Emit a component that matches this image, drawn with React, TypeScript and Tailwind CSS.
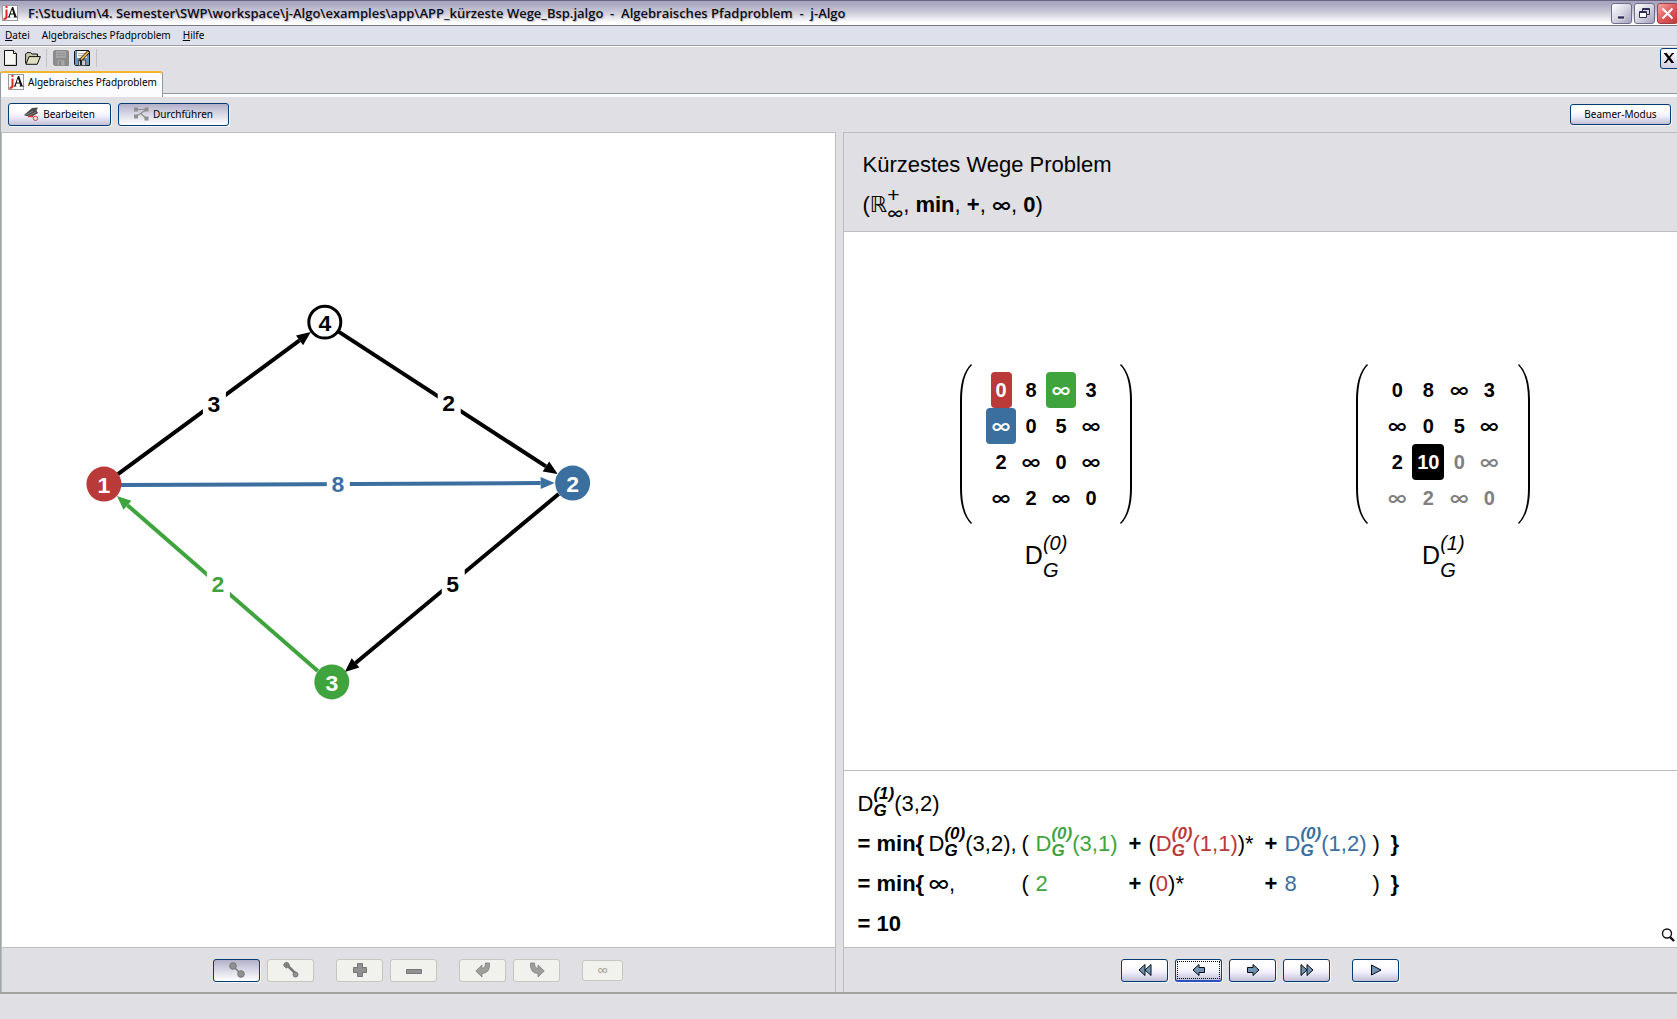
import type { ReactNode } from "react";

const RED = "#b93a39";
const GREEN = "#40a43e";
const BLUE = "#3a6f9f";

/* ---------- small building blocks ---------- */

function LogoIcon() {
  return (
    <svg width="16" height="16" viewBox="0 0 16 16" aria-hidden="true" className="shrink-0">
      <rect x="0.5" y="0.5" width="15" height="15" fill="#fff" stroke="#9a9a9a" />
      <path d="M4.500 4.500v7q0 2.500-3 2.500" fill="none" stroke="#e0281c" strokeWidth="2" />
      <rect x="3.500" y="1" width="2" height="2" fill="#e0281c" />
      <path d="M5.500 12.500V12l1-.5L10 2h1.200l3.300 9.500 1 .5v.5h-4V12l.7-.5-.6-2H8.400l-.7 2 .8.5v.5ZM8.700 8.500h2.600L10 4.600Z" fill="#111" fillRule="evenodd" />
    </svg>
  );
}

function Infinity({ italic = false, className = "text-[20px] font-medium" }: { italic?: boolean; className?: string }) {
  return (
    <span className={`font-['Inter',sans-serif] leading-none ${italic ? "italic" : ""} ${className}`}>∞</span>
  );
}

function Stacked({ sup, sub, large = false }: { sup: ReactNode; sub: ReactNode; large?: boolean }) {
  return (
    <span
      className={
        large
          ? "inline-flex flex-col align-[14px] text-[20px] leading-[27px] italic"
          : "inline-flex flex-col align-[12px] text-[17px] leading-[17px] font-bold italic"
      }
    >
      <span>{sup}</span>
      <span>{sub}</span>
    </span>
  );
}

function Dist({ step, from, to }: { step: number; from: number; to: number }) {
  return (
    <>
      D
      <Stacked sup={`(${step})`} sub="G" />({from},{to})
    </>
  );
}

function PushButton({
  label,
  children,
  state = "normal",
  size = "h-[23px] w-[47px]",
}: {
  label?: string;
  children: ReactNode;
  state?: "normal" | "pressed" | "disabled" | "focused";
  size?: string;
}) {
  const look = {
    normal: "border-[#003c74] bg-linear-to-b from-white from-30% via-[#efeefa] via-60% to-[#c3c0d8] shadow-[1px_1px_0_#f4f4f6]",
    focused: "border-[#003c74] border-b-2 border-b-[#2a50c0] bg-linear-to-b from-white from-30% via-[#efeefa] via-60% to-[#c3c0d8] shadow-[1px_1px_0_#f4f4f6]",
    pressed: "border-[#003c74] bg-linear-to-b from-[#b3b0c8] via-[#dad9e6] via-50% to-white shadow-[1px_1px_0_#f4f4f6]",
    disabled: "border-[#c6c5bf] bg-[#f1f1ed] text-[#a8a698]",
  }[state];
  return (
    <button
      type="button"
      aria-label={label}
      disabled={state === "disabled"}
      className={`relative flex items-center justify-center gap-1 rounded-[3px] border ${size} ${look}`}
    >
      {children}
      {state === "focused" && <span className="absolute inset-px border border-dotted border-black" />}
    </button>
  );
}

/* ---------- window chrome ---------- */

function TitleBar() {
  const frame = "flex h-[21px] w-[21px] items-center justify-center rounded-[3px] border";
  const grey = "border-[#6f6d8c] bg-linear-to-br from-white via-[#d6d5e2] to-[#a3a0bd]";
  return (
    <header className="flex h-[26px] items-center overflow-hidden border-y border-t-[#67637f] border-b-[#77768c] bg-linear-to-b from-[#a9a7c0] from-10% via-[#c9c8d6] via-45% to-white to-90% pl-0.5">
      <LogoIcon />
      <h1 className="ml-[10px] grow pt-px font-['Open_Sans',sans-serif] text-[13px] font-semibold whitespace-pre text-[#0c0c14] [text-shadow:1px_1px_1px_#b4b2c4]">
        {"F:\\Studium\\4. Semester\\SWP\\workspace\\j-Algo\\examples\\app\\APP_kürzeste Wege_Bsp.jalgo  -  Algebraisches Pfadproblem  -  j-Algo"}
      </h1>
      <div className="-mr-px flex shrink-0 gap-[2px]">
        <button type="button" aria-label="Minimieren" className={`${frame} ${grey}`}>
          <svg width="15" height="15" viewBox="0 0 15 15"><rect x="3.500" y="10" width="7" height="3" fill="#2f2d57" stroke="#fff" strokeWidth="0.600" /></svg>
        </button>
        <button type="button" aria-label="Wiederherstellen" className={`${frame} ${grey}`}>
          <svg width="15" height="15" viewBox="0 0 15 15" fill="none" stroke="#2f2d57">
            <path d="M5.500 5V2.500h7v6H10M5 3.500h8" />
            <path d="M2.500 5.500h7v6h-7ZM2 6.500h8" fill="#fff" />
          </svg>
        </button>
        <button type="button" aria-label="Schließen" className={`${frame} border-[#a04048] bg-linear-to-br from-[#f0a8a8] via-[#dd5a5c] to-[#c0393c]`}>
          <svg width="15" height="15" viewBox="0 0 15 15"><path d="m2.500 2.500 10 10M12.500 2.500l-10 10" stroke="#fff" strokeWidth="2" /></svg>
        </button>
      </div>
    </header>
  );
}

function MenuBar() {
  return (
    <nav className="flex h-5 items-center gap-3 border-b border-[#9a9ca0] bg-[#dee1eb] pl-[5px] text-[10px] leading-[15px]">
      <button type="button"><u>D</u>atei</button>
      <button type="button">Algebraisches Pfadproblem</button>
      <button type="button"><u>H</u>ilfe</button>
    </nav>
  );
}

function FloppyIcon({ muted = false }: { muted?: boolean }) {
  const c = muted
    ? { edge: "#8b8b8b", body: "#8b8b8b", paper: "#a5a5a5", metal: "#a8a8a8" }
    : { edge: "#10161c", body: "#6b93b5", paper: "#f4f4f0", metal: "#c9c9c9" };
  return (
    <svg width="16" height="16" viewBox="0 0 16 16" aria-hidden="true">
      <path d="M1.500.5h13l1 1v14h-14l-1-1v-13Z" fill={c.body} stroke={c.edge} />
      <rect x="3" y="1" width="10" height="7" fill={c.paper} />
      <path d="M4 3.500h8M4 5.500h8" stroke={muted ? "#959595" : "#b8b8b8"} />
      <rect x="4.500" y="10" width="7" height="5.500" fill={c.metal} stroke={muted ? "#979797" : "#444"} strokeWidth="0.800" />
      <rect x="6" y="11" width="2" height="4" fill={muted ? "#888" : "#1b2732"} />
      {!muted && (
        <>
          <path d="M13.800.8 15.500 2.500 8.500 10l-2.800 1 .8-2.800Z" fill="#f5ae3d" stroke="#111" strokeWidth="0.900" />
          <path d="m5.700 11 .5-1.700 1.300 1.200Z" fill="#111" />
        </>
      )}
    </svg>
  );
}

function ToolBar() {
  return (
    <div className="flex h-[25px] items-center border-t border-white pb-[2px] pl-1">
      <button type="button" aria-label="Neu">
        <svg width="13" height="16" viewBox="0 0 13 16">
          <path d="M.5.500h9l3 3v12H.5Z" fill="#f6f6f2" stroke="#111" />
          <path d="M9.500.5v3h3" fill="#fff" stroke="#111" />
          <path d="M11.500 5v9.500H2" fill="none" stroke="#cfcfc6" />
        </svg>
      </button>
      <button type="button" aria-label="Öffnen" className="ml-2">
        <svg width="16" height="13" viewBox="0 0 16 13">
          <path d="M.6 11.500V2L2 .6h3.500L7 2h5.500v2.500" fill="#c9c9a9" stroke="#111" />
          <path d="M1 12.300 4 4.600h11.400l-3.200 7.700Z" fill="#dedec0" stroke="#111" />
        </svg>
      </button>
      <span className="mr-[6px] ml-[5px] h-[18px] w-px bg-[#c2c2c2]" />
      <button type="button" aria-label="Speichern" disabled><FloppyIcon muted /></button>
      <button type="button" aria-label="Speichern unter" className="ml-[5px]"><FloppyIcon /></button>
      <span className="ml-[6px] h-[18px] w-px bg-[#c2c2c2]" />
      <button type="button" aria-label="Modul schließen" className="-mr-1 ml-auto flex h-[21px] w-[21px] items-center justify-center rounded-[3px] border border-[#003c74] bg-linear-to-b from-white to-[#d2d0e2]">
        <svg width="12" height="12" viewBox="0 0 12 12" fill="none" stroke="#000" className="mr-1">
          <path d="M1 1.500h2M9 1.500h2M1 10.500h2M9 10.500h2" strokeWidth="1.200" />
          <path d="m2.500 1.500 7 9" strokeWidth="2.400" />
          <path d="m9.500 1.500-7 9" strokeWidth="1.600" />
        </svg>
      </button>
    </div>
  );
}

function TabStrip() {
  return (
    <div className="flex h-[26px] items-end" role="tablist">
      <button
        type="button"
        role="tab"
        aria-selected="true"
        className="flex h-[26px] shrink-0 items-center gap-1 rounded-t-[3px] border-x border-t-2 border-x-[#919b9c] border-t-[#f5b52c] bg-[#fcfcfe] pr-[5px] pb-[6px] pl-[7px] text-[10px]"
      >
        <LogoIcon />
        Algebraisches Pfadproblem
      </button>
      <span className="h-1 grow border-t border-[#919b9c] bg-[#fcfcfe]" />
    </div>
  );
}

function ModeBar() {
  return (
    <div className="flex h-[35px] items-center gap-[7px] pr-[6px] pb-px pl-[7px] text-[10px]">
      <PushButton size="h-[23px] w-[103px]">
        <svg width="15" height="14" viewBox="0 0 15 14" aria-hidden="true">
          <path d="M0 8 8 1l6-.5-1.500 3L14 6 8 9.500 2 9Z" fill="#4c4c4c" />
          <path d="M1 8.500 9 4M4 9l8-4" stroke="#8a8a8a" strokeWidth="0.800" />
          <path d="M4 9.500h5" stroke="#d33" strokeWidth="1.500" />
          <circle cx="11.500" cy="11.300" r="2.200" fill="#fbdcdc" stroke="#cf4444" />
        </svg>
        Bearbeiten
      </PushButton>
      <PushButton size="h-[23px] w-[111px]" state="pressed">
        <svg width="15" height="14" viewBox="0 0 15 14" aria-hidden="true" fill="#8f8f8f" stroke="#8f8f8f">
          <path d="M2 2.500h10.500L2 9.500M7 6.500l5.500 5.500" fill="none" strokeWidth="1.200" />
          <rect x="0.500" y="1" width="3" height="3" />
          <rect x="11" y="1" width="3" height="3" />
          <rect x="0.500" y="8" width="3" height="3" />
          <rect x="11" y="10" width="3" height="3" />
        </svg>
        Durchführen
      </PushButton>
      <span className="grow" />
      <PushButton size="h-[21px] w-[101px]">Beamer-Modus</PushButton>
    </div>
  );
}

/* ---------- graph ---------- */

type Edge = { x1: number; y1: number; x2: number; y2: number; lx: number; ly: number; weight: number; color: string };

const edges: Edge[] = [
  { x1: 118, y1: 474, x2: 311, y2: 332, lx: 214, ly: 404, weight: 3, color: "#000" },
  { x1: 338, y1: 331, x2: 558, y2: 474, lx: 449, ly: 403, weight: 2, color: "#000" },
  { x1: 121, y1: 485, x2: 555, y2: 483, lx: 338, ly: 484, weight: 8, color: BLUE },
  { x1: 559, y1: 494, x2: 345, y2: 672, lx: 453, ly: 584, weight: 5, color: "#000" },
  { x1: 318, y1: 671, x2: 117, y2: 496, lx: 218, ly: 584, weight: 2, color: GREEN },
];

const nodes = [
  { id: 1, x: 104, y: 484, fill: RED },
  { id: 2, x: 573, y: 483, fill: BLUE },
  { id: 3, x: 332, y: 682, fill: GREEN },
  { id: 4, x: 325, y: 322, fill: "" },
];

function GraphEdge({ x1, y1, x2, y2, lx, ly, weight, color }: Edge) {
  const len = Math.hypot(x2 - x1, y2 - y1);
  const ux = (x2 - x1) / len;
  const uy = (y2 - y1) / len;
  const bx = x2 - ux * 14;
  const by = y2 - uy * 14;
  return (
    <g>
      <line x1={x1} y1={y1} x2={bx} y2={by} stroke={color} strokeWidth="4" />
      <polygon points={`${x2},${y2} ${bx - uy * 6},${by + ux * 6} ${bx + uy * 6},${by - ux * 6}`} fill={color} />
      <rect x={lx - 11} y={ly - 14} width="23" height="28" fill="#fff" />
      <text x={lx} y={ly + 8} textAnchor="middle" fill={color}>{weight}</text>
    </g>
  );
}

function Graph() {
  return (
    <svg viewBox="2 133 833 814" className="h-full w-full font-['Liberation_Sans',Arial,sans-serif] text-[23px] font-bold" role="img" aria-label="Graph mit vier Knoten">
      {edges.map((e) => <GraphEdge key={`${e.x1}-${e.x2}`} {...e} />)}
      {nodes.map((n) => (
        <g key={n.id}>
          {n.fill ? (
            <circle cx={n.x} cy={n.y} r="17.500" fill={n.fill} />
          ) : (
            <circle cx={n.x} cy={n.y} r="16" fill="#fff" stroke="#000" strokeWidth="3" />
          )}
          <text x={n.x} y={n.y + 9} textAnchor="middle" fill={n.fill ? "#fff" : "#000"}>{n.id}</text>
        </g>
      ))}
    </svg>
  );
}

function EditBar() {
  const g = { fill: "#919191", stroke: "#777" };
  return (
    <div className="flex h-[45px] items-center justify-center gap-[22px] border-t border-[#bdbdbd]">
      <div className="flex gap-[7px]">
        <PushButton label="Knoten" state="pressed">
          <svg width="16" height="16" viewBox="0 0 16 16" {...g}>
            <path d="m4 4 8 8" strokeWidth="1.500" />
            <circle cx="4" cy="4" r="3.300" /><circle cx="12" cy="12" r="3.300" />
          </svg>
        </PushButton>
        <PushButton label="Kante" state="disabled">
          <svg width="16" height="16" viewBox="0 0 16 16" {...g}>
            <path d="m4 3 9 9" strokeWidth="2.500" />
            <circle cx="3.500" cy="3" r="2.500" /><circle cx="12.500" cy="12.500" r="2.500" />
            <path d="M3.500-.5v7M0 3h7" strokeWidth="0.800" />
          </svg>
        </PushButton>
      </div>
      <div className="flex gap-[7px]">
        <PushButton label="Vergrößern" state="disabled">
          <svg width="16" height="16" viewBox="0 0 16 16" {...g}><path d="M5.500 1.500h5v4h4v5h-4v4h-5v-4h-4v-5h4Z" /></svg>
        </PushButton>
        <PushButton label="Verkleinern" state="disabled">
          <svg width="16" height="16" viewBox="0 0 16 16" {...g}><path d="M.5 7.500h15v4H.5Z" /></svg>
        </PushButton>
      </div>
      <div className="flex gap-[7px]">
        <PushButton label="Rückgängig" state="disabled">
          <svg width="16" height="16" viewBox="0 0 16 16" fill="#9e9e9e" stroke="#808080" strokeWidth="0.800"><path d="M.8 9 7 3v3.500q3.500-.5 3.500-5.500h4q1 10-7.500 10.500V15Z" /></svg>
        </PushButton>
        <PushButton label="Wiederholen" state="disabled">
          <svg width="16" height="16" viewBox="0 0 16 16" fill="#9e9e9e" stroke="#808080" strokeWidth="0.800"><path d="M15.200 9 9 3v3.500Q5.500 6 5.500 1h-4Q.5 11 9 11.500V15Z" /></svg>
        </PushButton>
      </div>
      <PushButton label="Unendlich" state="disabled" size="h-[21px] w-[41px]">
        <Infinity className="text-[11px]" />
      </PushButton>
    </div>
  );
}

/* ---------- matrices ---------- */

type Cell = { v: string; tone?: "red" | "green" | "blue" | "current" | "old" };

const before: Cell[][] = [
  [{ v: "0", tone: "red" }, { v: "8" }, { v: "∞", tone: "green" }, { v: "3" }],
  [{ v: "∞", tone: "blue" }, { v: "0" }, { v: "5" }, { v: "∞" }],
  [{ v: "2" }, { v: "∞" }, { v: "0" }, { v: "∞" }],
  [{ v: "∞" }, { v: "2" }, { v: "∞" }, { v: "0" }],
];

const after: Cell[][] = [
  [{ v: "0" }, { v: "8" }, { v: "∞" }, { v: "3" }],
  [{ v: "∞" }, { v: "0" }, { v: "5" }, { v: "∞" }],
  [{ v: "2" }, { v: "10", tone: "current" }, { v: "0", tone: "old" }, { v: "∞", tone: "old" }],
  [{ v: "∞", tone: "old" }, { v: "2", tone: "old" }, { v: "∞", tone: "old" }, { v: "0", tone: "old" }],
];

const tones = {
  red: "bg-[#b93a39] text-white",
  green: "bg-[#40a43e] text-white",
  blue: "bg-[#3a6f9f] text-white",
  current: "bg-black text-white",
  old: "text-[#808080]",
};

function Paren({ right = false }: { right?: boolean }) {
  return (
    <svg width="12" height="160" viewBox="0 0 12 160" aria-hidden="true" fill="#000">
      {right ? (
        <path d="M0 1Q10 11 10 36V124Q10 149 0 159L1 160Q12 149 12 124V36Q12 11 1 0Z" />
      ) : (
        <path d="M12 1Q2 11 2 36V124Q2 149 12 159L11 160Q0 149 0 124V36Q0 11 11 0Z" />
      )}
    </svg>
  );
}

function Matrix({ cells, step }: { cells: Cell[][]; step: number }) {
  return (
    <figure className="flex flex-col items-center">
      <div className="flex items-center">
        <Paren />
        <table className="mx-[14px] text-center text-[20px] leading-9 font-bold">
          <tbody>
            {cells.map((row, r) => (
              <tr key={r}>
                {row.map((c, i) => (
                  <td key={i} className="h-9 min-w-[30px] p-0">
                    <span className={`mx-auto flex h-9 items-center justify-center rounded-[4px] ${c.v === "∞" ? "w-[30px]" : c.v === "10" ? "w-8" : "w-[21px]"} ${c.tone ? tones[c.tone] : ""}`}>
                      {c.v === "∞" ? <Infinity /> : c.v}
                    </span>
                  </td>
                ))}
              </tr>
            ))}
          </tbody>
        </table>
        <Paren right />
      </div>
      <figcaption className="h-[60px] pt-[6px] text-[25px] leading-[27px] whitespace-nowrap">
        D<Stacked large sup={`(${step})`} sub="G" />
      </figcaption>
    </figure>
  );
}

/* ---------- formula ---------- */

function Formula() {
  return (
    <div className="relative grid h-[177px] grid-cols-[71px_93px_14px_93px_20px_116px_20px_88px_18px_auto] grid-rows-[repeat(4,40px)] content-start items-baseline justify-start border-t border-[#bdbdbd] pt-[13px] pl-[14px] text-[22px] leading-10 whitespace-nowrap">
      <div className="col-span-10 h-10"><Dist step={1} from={3} to={2} /></div>

      <div className="h-10 font-bold">= min{"{"}</div>
      <div className="h-10"><Dist step={0} from={3} to={2} />,</div>
      <div>(</div>
      <div className="h-10 text-[#40a43e]"><Dist step={0} from={3} to={1} /></div>
      <div className="font-bold">+</div>
      <div className="h-10">(<span className="text-[#b93a39]"><Dist step={0} from={1} to={1} /></span>)*</div>
      <div className="font-bold">+</div>
      <div className="h-10 text-[#3a6f9f]"><Dist step={0} from={1} to={2} /></div>
      <div>)</div>
      <div className="font-bold">{"}"}</div>

      <div className="font-bold">= min{"{"}</div>
      <div><Infinity className="text-[22px]" />,</div>
      <div>(</div>
      <div className="text-[#40a43e]">2</div>
      <div className="font-bold">+</div>
      <div>(<span className="text-[#b93a39]">0</span>)*</div>
      <div className="font-bold">+</div>
      <div className="text-[#3a6f9f]">8</div>
      <div>)</div>
      <div className="font-bold">{"}"}</div>

      <div className="col-span-10 font-bold">= 10</div>

      <button type="button" aria-label="Zoom" className="absolute right-[2px] bottom-[5px]">
        <svg width="14" height="14" viewBox="0 0 14 14" fill="none" stroke="#111">
          <circle cx="6" cy="5.500" r="4.500" strokeWidth="1.400" />
          <path d="m9 9 4 4" strokeWidth="2.400" />
        </svg>
      </button>
    </div>
  );
}

function StepBar() {
  const a = { fill: "#6f93b5", stroke: "#05080c", strokeWidth: 1 };
  return (
    <div className="flex h-[45px] items-center justify-center gap-[22px] border-t border-[#bdbdbd]">
      <div className="flex gap-[7px]">
        <PushButton label="Zum Anfang">
          <svg width="14" height="14" viewBox="0 0 14 14" {...a}><path d="M7 1.500v11L1 7ZM13 1.500v11L7 7Z" /></svg>
        </PushButton>
        <PushButton label="Schritt zurück" state="focused">
          <svg width="14" height="14" viewBox="0 0 14 14" {...a}><path d="M1 7 7 1.500v3h5.500v5H7v3Z" /></svg>
        </PushButton>
        <PushButton label="Schritt vor">
          <svg width="14" height="14" viewBox="0 0 14 14" {...a}><path d="M13 7 7 1.500v3H1.500v5H7v3Z" /></svg>
        </PushButton>
        <PushButton label="Zum Ende">
          <svg width="14" height="14" viewBox="0 0 14 14" {...a}><path d="M7 1.500v11L13 7ZM1 1.500v11L7 7Z" /></svg>
        </PushButton>
      </div>
      <PushButton label="Abspielen">
        <svg width="12" height="12" viewBox="0 0 12 12" {...a}><path d="M1.500 1v10L11 6Z" /></svg>
      </PushButton>
    </div>
  );
}

/* ---------- page ---------- */

export default function App() {
  return (
    <div className="flex min-h-screen flex-col overflow-hidden bg-[#e0dfe3] font-['Noto_Sans',Tahoma,sans-serif] text-black">
      <TitleBar />
      <MenuBar />
      <ToolBar />
      <TabStrip />
      <div className="flex grow flex-col border-l border-[#a0a6a8]">
        <ModeBar />
        <main className="grid grow grid-cols-2 gap-[7px] border-b-2 border-[#a2a49f]">
          <section className="flex flex-col border-t border-r border-l border-[#bdbdbd]">
            <div className="flex min-h-0 grow basis-0 bg-white"><Graph /></div>
            <EditBar />
          </section>
          <section className="flex flex-col border-t border-l border-[#bdbdbd] font-['Liberation_Sans',Arial,sans-serif]">
            <div className="h-[98px] pt-3 pl-[19px] text-[22px] leading-10">
              <h2>Kürzestes Wege Problem</h2>
              <p className="h-10 whitespace-nowrap">
                (<span className="font-['DejaVu_Sans',sans-serif] text-[22px] leading-none">ℝ</span>
                <span className="inline-flex flex-col align-[10px] text-[21px] leading-[20px]">
                  <span>+</span>
                  <Infinity italic className="h-5 text-[17px]" />
                </span>
                , <b>min</b>, <b>+</b>, <Infinity />, <b>0</b>)
              </p>
            </div>
            <div className="grid grow grid-cols-2 items-center border-t border-[#bdbdbd] bg-white pr-[35px] pb-[54px] pl-1">
              <Matrix cells={before} step={0} />
              <Matrix cells={after} step={1} />
            </div>
            <div className="bg-white"><Formula /></div>
            <StepBar />
          </section>
        </main>
      </div>
      <footer className="h-[25px]" />
    </div>
  );
}
